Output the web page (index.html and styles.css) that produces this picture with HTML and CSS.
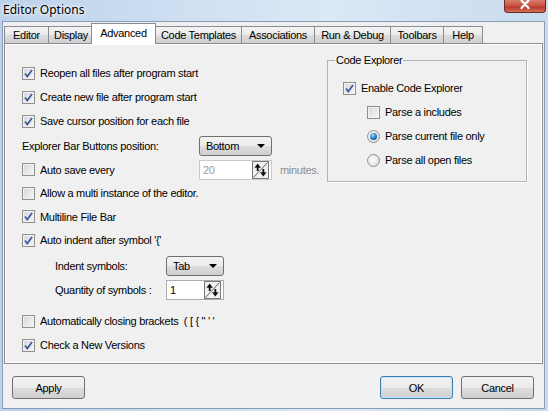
FILE: index.html
```html
<!DOCTYPE html>
<html lang="en">
<head>
  <meta charset="UTF-8" />
  <title>Editor Options</title>
  <link rel="stylesheet" href="styles.css">
</head>
<body>
  <div class="window">
    <div class="titlebar">
      <span class="title">Editor Options</span>
      <span class="close">
        <svg width="12" height="9" viewBox="0 0 12 9"><path d="M2.5 0.5 L9.5 8 M9.5 0.5 L2.5 8" stroke="#fff" stroke-width="2.2" stroke-linecap="round"/></svg>
      </span>
    </div>

    <div class="client">
      <div class="tabs">
        <span class="tab t-editor">Editor</span>
        <span class="tab t-display">Display</span>
        <span class="tab t-advanced active">Advanced</span>
        <span class="tab t-templates">Code Templates</span>
        <span class="tab t-assoc">Associations</span>
        <span class="tab t-run">Run &amp; Debug</span>
        <span class="tab t-toolbars">Toolbars</span>
        <span class="tab t-help">Help</span>
      </div>

      <div class="panel">
        <div class="col">
          <label class="row"><span class="cb on"><svg viewBox="0 0 11 11"><path d="M2 5.5 L4.3 8.5 L9 2" fill="none" stroke="#3b5aa8" stroke-width="1.8"/></svg></span>Reopen all files after program start</label>
          <label class="row"><span class="cb on"><svg viewBox="0 0 11 11"><path d="M2 5.5 L4.3 8.5 L9 2" fill="none" stroke="#3b5aa8" stroke-width="1.8"/></svg></span>Create new file after program start</label>
          <label class="row"><span class="cb on"><svg viewBox="0 0 11 11"><path d="M2 5.5 L4.3 8.5 L9 2" fill="none" stroke="#3b5aa8" stroke-width="1.8"/></svg></span>Save cursor position for each file</label>

          <div class="row r-explorer">
            <span class="lbl">Explorer Bar Buttons position:</span>
            <span class="combo wide">Bottom<i class="arrow"></i></span>
          </div>

          <div class="row r-autosave">
            <label class="lbl"><span class="cb"></span>Auto save every</label>
            <span class="spin disabled wide">
              <span class="val">20</span>
              <span class="spinbtn"><svg viewBox="0 0 16 17"><path d="M0.5 16.5 L15.5 0.5" stroke="#555" stroke-width="1"/><path d="M5 1.5 L1.5 6 H4 V9.5 H6 V6 H8.5 Z M11 15.5 L7.5 11 H10 V7.5 H12 V11 H14.5 Z" fill="#111"/></svg></span>
            </span>
            <span class="muted">minutes.</span>
          </div>

          <label class="row"><span class="cb"></span>Allow a multi instance of the editor.</label>
          <label class="row r-short"><span class="cb on"><svg viewBox="0 0 11 11"><path d="M2 5.5 L4.3 8.5 L9 2" fill="none" stroke="#3b5aa8" stroke-width="1.8"/></svg></span>Multiline File Bar</label>
          <label class="row"><span class="cb on"><svg viewBox="0 0 11 11"><path d="M2 5.5 L4.3 8.5 L9 2" fill="none" stroke="#3b5aa8" stroke-width="1.8"/></svg></span>Auto indent after symbol '{'</label>

          <div class="row indent r-indent">
            <span class="lbl short">Indent symbols:</span>
            <span class="combo narrow">Tab<i class="arrow"></i></span>
          </div>
          <div class="row indent r-short">
            <span class="lbl short">Quantity of symbols :</span>
            <span class="spin narrow">
              <span class="val">1</span>
              <span class="spinbtn"><svg viewBox="0 0 16 17"><path d="M0.5 16.5 L15.5 0.5" stroke="#555" stroke-width="1"/><path d="M5 1.5 L1.5 6 H4 V9.5 H6 V6 H8.5 Z M11 15.5 L7.5 11 H10 V7.5 H12 V11 H14.5 Z" fill="#111"/></svg></span>
            </span>
          </div>

          <label class="row r-gap"><span class="cb"></span>Automatically closing brackets &nbsp;( [ { " ' '</label>
          <label class="row"><span class="cb on"><svg viewBox="0 0 11 11"><path d="M2 5.5 L4.3 8.5 L9 2" fill="none" stroke="#3b5aa8" stroke-width="1.8"/></svg></span>Check a New Versions</label>
        </div>

        <fieldset class="group">
          <legend>Code Explorer</legend>
          <label class="row"><span class="cb on"><svg viewBox="0 0 11 11"><path d="M2 5.5 L4.3 8.5 L9 2" fill="none" stroke="#3b5aa8" stroke-width="1.8"/></svg></span>Enable Code Explorer</label>
          <div class="sub">
            <label class="row"><span class="cb"></span>Parse a includes</label>
            <label class="row"><span class="rb on"></span>Parse current file only</label>
            <label class="row"><span class="rb"></span>Parse all open files</label>
          </div>
        </fieldset>
      </div>

      <div class="buttons">
        <button class="btn">Apply</button>
        <span class="spacer"></span>
        <button class="btn default">OK</button>
        <button class="btn">Cancel</button>
      </div>
    </div>
  </div>
</body>
</html>
```

FILE: styles.css
```css
html, body {
  margin: 0;
  padding: 0;
}
body {
  font-family: 'Liberation Sans', Arial, sans-serif;
  font-size: 11px;
  letter-spacing: -0.3px;
  color: #000;
  background: #c5d9ef;
}
.window {
  width: 548px;
  height: 411px;
  display: flex;
  flex-direction: column;
  background: linear-gradient(to right, #bcd2ea 0%, #cfe0f2 35%, #dbe8f6 60%, #c8dbef 100%);
}

/* title bar */
.titlebar {
  height: 21px;
  display: flex;
  align-items: flex-start;
}
.title {
  font-family: 'Noto Sans', sans-serif;
  font-size: 12px;
  letter-spacing: 0;
  margin: 1px 0 0 3px;
  text-shadow: 0 0 6px #fff, 0 0 3px #fff;
}
.close {
  margin-left: auto;
  margin-right: 2px;
  width: 40px;
  height: 12px;
  border: 1px solid #6b2a25;
  border-top: none;
  border-radius: 0 0 4px 4px;
  background: linear-gradient(#d77e6c, #c9503e 50%, #b8392a 60%, #d0745a);
  display: flex;
  justify-content: center;
  align-items: flex-start;
}

/* client area */
.client {
  height: 386px;
  margin: 0 3px 0 2px;
  background: #f0f0f0;
  border: 1px solid #8a9bb3;
  display: flex;
  flex-direction: column;
}

/* tabs */
.tabs {
  display: flex;
  align-items: flex-end;
  height: 21px;
  padding-left: 1px;
  position: relative;
  z-index: 1;
}
.tab {
  box-sizing: border-box;
  height: 17px;
  line-height: 16px;
  text-align: center;
  border: 1px solid #898c95;
  border-bottom: none;
  margin-right: -1px;
  background: linear-gradient(#f3f3f3, #ebebeb 50%, #dddddd 51%, #cfcfcf);
  white-space: nowrap;
}
.t-editor { width: 45px; }
.t-display { width: 46px; }
.t-templates { width: 87px; }
.t-assoc { width: 74px; }
.t-run { width: 77px; }
.t-toolbars { width: 54px; }
.t-help { width: 40px; }
.tab.active {
  width: 65px;
  height: 21px;
  line-height: 18px;
  margin-left: -2px;
  background: #fff;
  position: relative;
  top: 1px;
  z-index: 2;
}

/* tab page */
.panel {
  box-sizing: border-box;
  height: 321px;
  margin: 0 1px;
  border: 1px solid #898c95;
  background: #f0f0f0;
  box-shadow: inset 0 0 0 1px #fff;
  display: flex;
  align-items: flex-start;
  padding: 17px 0 0 17px;
}
.col {
  width: 305px;
  display: flex;
  flex-direction: column;
}
.row {
  height: 24px;
  display: flex;
  align-items: center;
  white-space: nowrap;
}
.r-explorer { height: 25px; }
.r-autosave { height: 23px; }
.r-short { height: 23px; }
.r-indent { margin-top: 2px; }
.r-gap { margin-top: 8px; }
.row.indent {
  padding-left: 33px;
}
.lbl {
  display: flex;
  align-items: center;
  width: 177px;
}
.lbl.short {
  width: 111px;
}

/* check boxes & radios */
.cb {
  width: 11px;
  height: 11px;
  border: 1px solid #8e8f8f;
  background: linear-gradient(135deg, #d6d6d6, #f7f7f7);
  box-shadow: inset 0 0 0 1px #f2f2f2;
  margin-right: 5px;
  flex: none;
  display: flex;
}
.cb svg {
  width: 11px;
  height: 11px;
}
.rb {
  width: 11px;
  height: 11px;
  border: 1px solid #8e8f8f;
  border-radius: 50%;
  background: radial-gradient(circle at 40% 40%, #fff, #d4d4d4);
  margin-right: 5px;
  flex: none;
  position: relative;
}
.rb.on::after {
  content: "";
  position: absolute;
  left: 2px;
  top: 2px;
  width: 7px;
  height: 7px;
  border-radius: 50%;
  background: radial-gradient(circle at 40% 35%, #9fdcff, #1d72bd 55%, #0b3d78);
}

/* combo boxes */
.combo {
  box-sizing: border-box;
  border: 1px solid #707070;
  border-radius: 3px;
  background: linear-gradient(#f3f3f3, #ebebeb 50%, #dddddd 51%, #cfcfcf);
  display: flex;
  align-items: center;
  padding-left: 6px;
}
.combo.wide { width: 73px; height: 20px; }
.combo.narrow { width: 58px; height: 20px; }
.arrow {
  margin-left: auto;
  margin-right: 6px;
  width: 0;
  height: 0;
  border-left: 4px solid transparent;
  border-right: 4px solid transparent;
  border-top: 4px solid #000;
}

/* spin edits */
.spin {
  box-sizing: border-box;
  height: 20px;
  border: 1px solid #abadb3;
  background: #fff;
  display: flex;
  align-items: flex-start;
}
.spin.wide { width: 73px; }
.spin.narrow { width: 58px; }
.spin.disabled {
  border-color: #cacaca;
  color: #9a9a9a;
}
.val {
  padding: 3px 0 0 3px;
  flex: 1;
}
.spinbtn {
  width: 17px;
  height: 18px;
  margin-right: 2px;
  box-sizing: border-box;
  border: 1px solid #7a7a7a;
  background: #f0f0f0;
  display: flex;
}
.spinbtn svg { width: 15px; height: 16px; }
.muted {
  color: #8d8d8d;
  margin-left: 8px;
}

/* group box */
.group {
  margin: -7px 0 0 0;
  width: 200px;
  height: 128px;
  box-sizing: border-box;
  border: 1px solid #b2b2b2;
  box-shadow: 1px 1px 0 #fff;
  padding: 10px 0 0 0;
}
.group legend {
  padding: 0 1px;
  margin-left: 7px;
}
.group .row {
  height: 24px;
  padding-left: 15px;
}
.sub {
  padding-left: 24px;
}

/* bottom buttons */
.buttons {
  display: flex;
  align-items: center;
  padding: 12px 10px 0 9px;
  gap: 8px;
}
.spacer { flex: 1; }
.btn {
  font-family: inherit;
  font-size: 11px;
  letter-spacing: -0.3px;
  width: 73px;
  height: 23px;
  border: 1px solid #707070;
  border-radius: 3px;
  background: linear-gradient(#f2f2f2, #ebebeb 50%, #dddddd 51%, #cfcfcf);
  padding: 0;
}
.btn.default {
  border-color: #3c7fb1;
  box-shadow: inset 0 0 0 1px #bfe6f8;
}
```
